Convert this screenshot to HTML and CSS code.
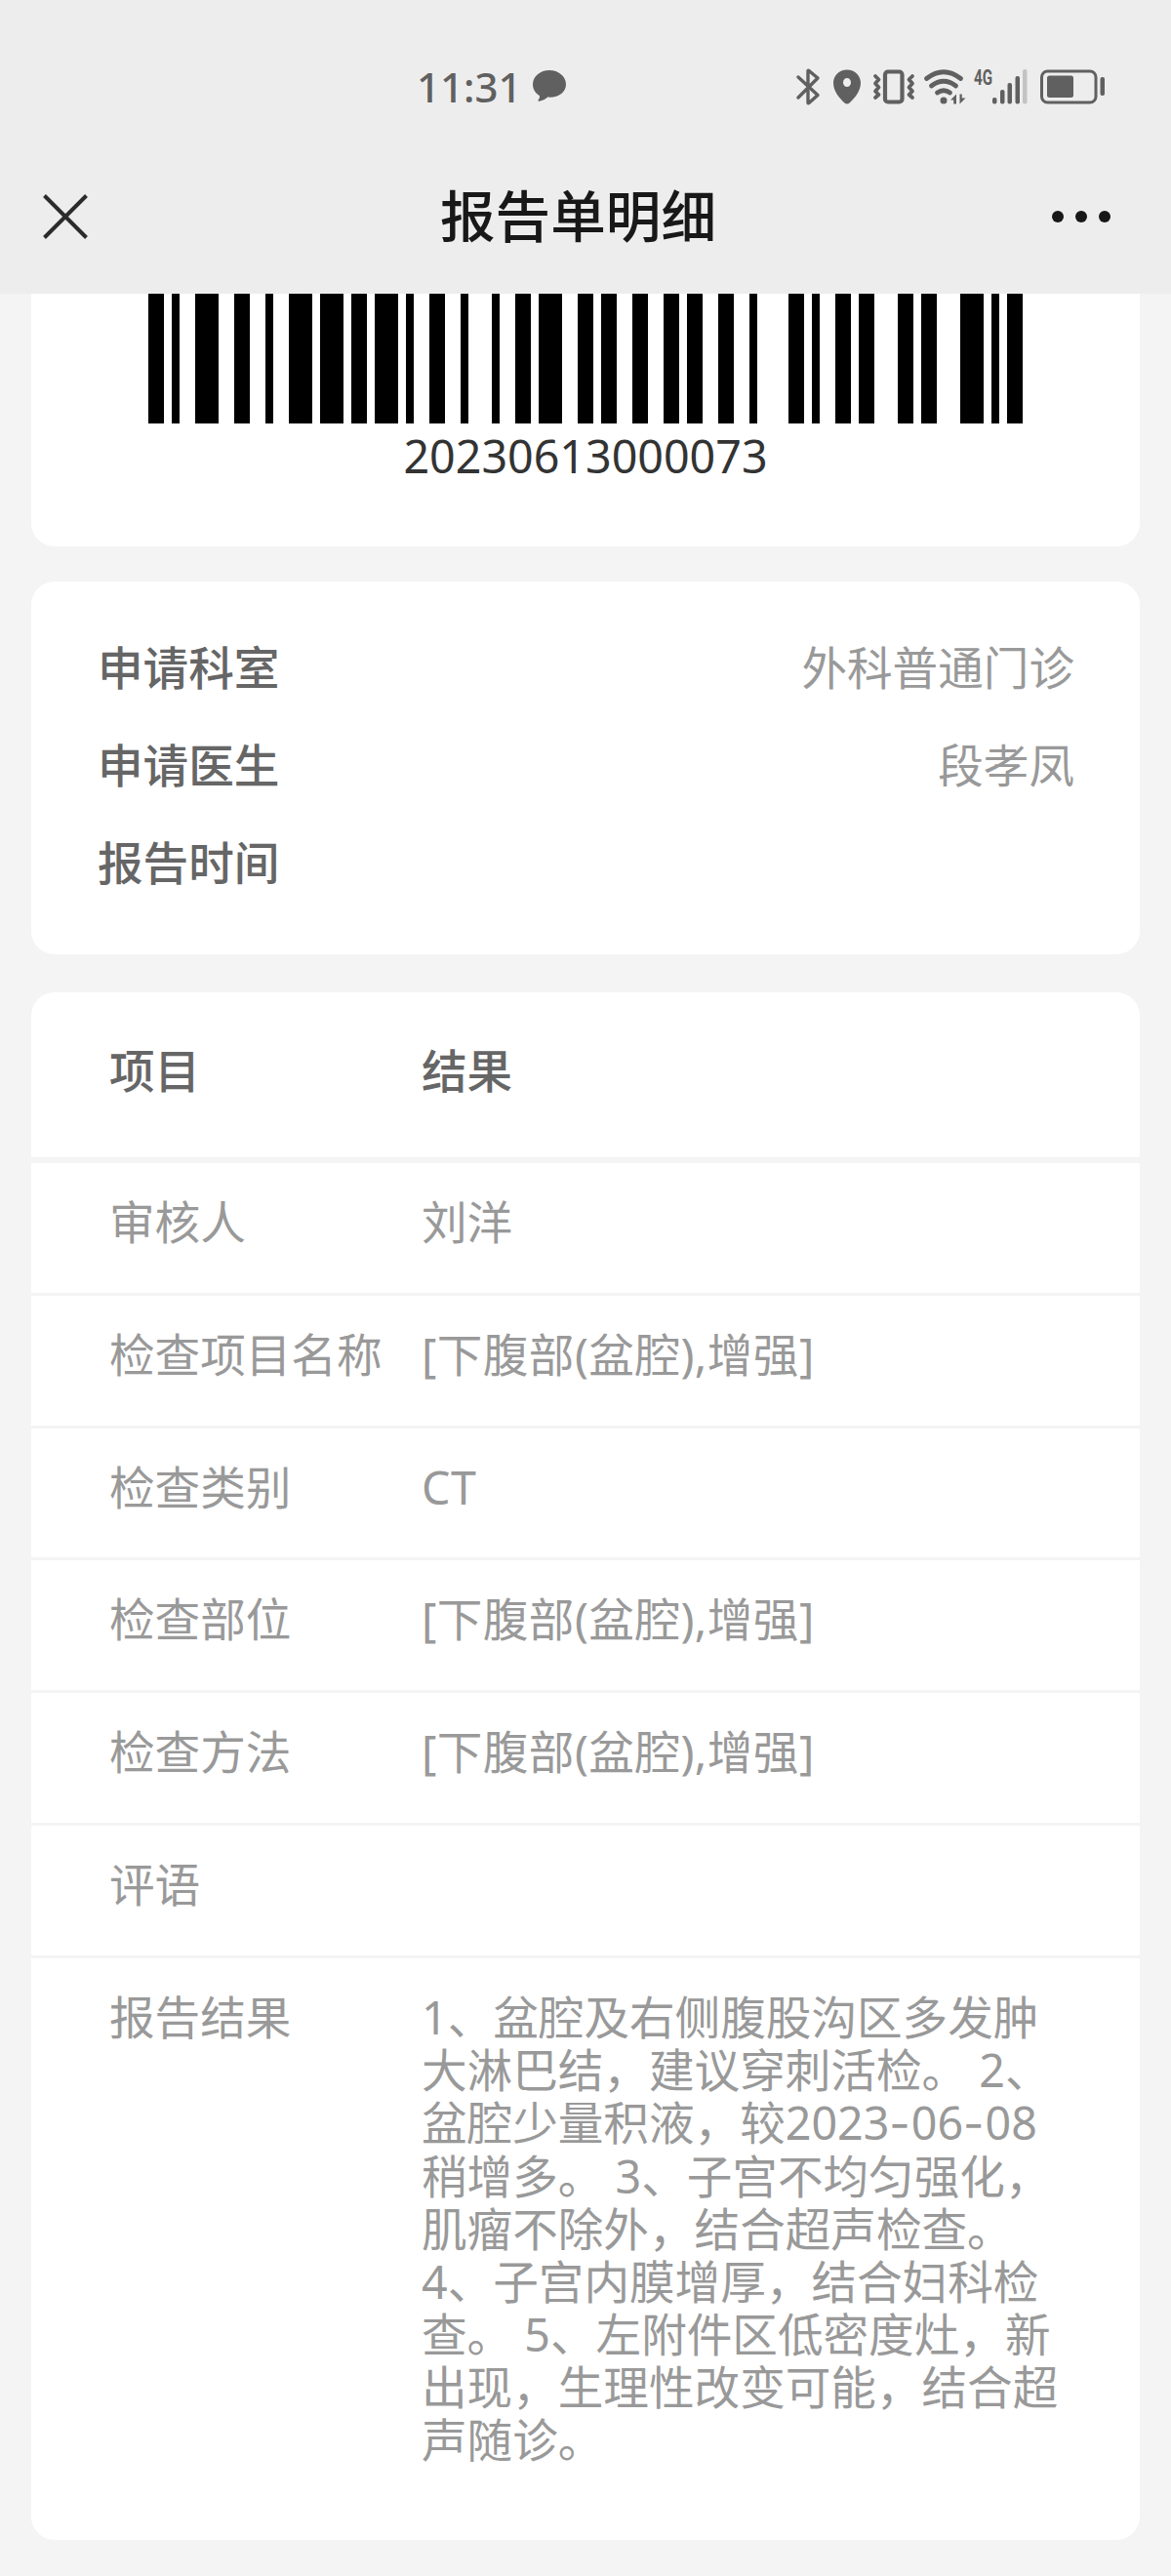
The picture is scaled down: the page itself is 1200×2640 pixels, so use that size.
FILE: index.html
```html
<!DOCTYPE html>
<html lang="zh-CN">
<head>
    <meta charset="UTF-8">
    <meta name="viewport" content="width=device-width, initial-scale=1.0">
    <title>报告单明细</title>
    <link rel="stylesheet" href="styles.css">
</head>
<body>
    <header>
        <div class="status">
            <div class="clock">
                <span>11:31</span>
                <svg width="34" height="34" viewBox="0 0 34 34"><path d="M17 1C7.600 1 0 7.200 0 15.500c0 4.800 2.500 8.800 6.800 11.500.6 1.500-.2 3-1.200 4.600-.4.8.1 1.400 1 1.200 3.600-.8 6.200-2 8.600-4.200C26 29.500 34 23.800 34 15.500 34 7.200 26.400 1 17 1z"/></svg>
            </div>
            <div class="icons">
                <!-- bluetooth -->
                <svg class="line" width="24" height="38" viewBox="0 0 24 38"><path d="M2 9l20 18.500-9 8q-1 .8-1-.5V23M2 30L22 10l-9-7.500q-1-.8-1 .5V16"/></svg>
                <!-- location -->
                <svg class="pin" width="28" height="36" viewBox="0 0 28 36"><path fill-rule="evenodd" d="M14 .5C6 .5 0 6.500 0 14c0 8 6 15.500 11.500 20.500q2.500 2 5 0C22 29.500 28 22 28 14 28 6.500 22 .5 14 .5zM14 9a4 4.500 0 1 1 0 9 4 4.500 0 1 1 0-9z"/></svg>
                <!-- vibrate -->
                <svg class="vibrate line" width="42" height="36" viewBox="0 0 42 36"><rect x="12" y="2.500" width="17.500" height="31" rx="3"/><path class="zig" d="M2 7l3.500 3.500-3.500 4 3.500 4-3.500 4 3.500 3.500-3.500 3M40 7l-3.500 3.500 3.500 4-3.500 4 3.500 4-3.500 3.500 3.500 3"/></svg>
                <!-- wifi -->
                <svg class="wifi line" width="43" height="36" viewBox="0 0 43 36"><path d="M2.500 9.500q17.500-13.500 35 0M7.500 17q12.500-9.500 25 0M13.500 24q6.500-4.500 13 0"/><circle class="solid" cx="20" cy="32" r="3.500"/><path class="solid" d="M27 31.500l6-6V35.500h-2.800v-4zM42.500 29.500l-6 6V25.500h2.300v4z"/></svg>
                <!-- signal -->
                <svg class="signal" width="55" height="36" viewBox="0 0 55 36"><text x="0" y="16" textLength="19" lengthAdjust="spacingAndGlyphs">4G</text><rect x="19" y="29" width="4.500" height="6.500" rx="2"/><rect x="27" y="21" width="4.500" height="14.500" rx="2"/><rect x="34.500" y="14" width="4.500" height="21.500" rx="2"/><rect x="42.500" y="7" width="4.500" height="28.500" rx="2"/><rect class="off" x="50" y="0" width="4.500" height="35.500" rx="2"/></svg>
                <!-- battery -->
                <svg class="battery" width="67" height="36" viewBox="0 0 67 36"><rect class="case" x="1.500" y="2" width="55.500" height="32" rx="6"/><rect x="7" y="6.500" width="27" height="22.500" rx="2.500"/><rect x="61.500" y="8" width="4.500" height="19" rx="2"/></svg>
            </div>
        </div>
        <div class="navbar">
            <svg class="close" width="46" height="46" viewBox="0 0 46 46"><path d="M1.500 1.500l43 43M44.500 1.500l-43 43"/></svg>
            <h1>报告单明细</h1>
            <svg class="more" width="60" height="12" viewBox="0 0 60 12"><circle cx="6" cy="6" r="6"/><circle cx="30" cy="6" r="6"/><circle cx="54" cy="6" r="6"/></svg>
        </div>
    </header>

    <div class="card code">
        <svg width="896" height="133" viewBox="0 0 112 133" preserveAspectRatio="none"><path d="M0 0h2v133h-2zM3 0h1v133h-1zM6 0h3v133h-3zM11 0h2v133h-2zM15 0h1v133h-1zM18 0h3v133h-3zM22 0h3v133h-3zM26 0h2v133h-2zM29 0h3v133h-3zM33 0h1v133h-1zM36 0h2v133h-2zM40 0h1v133h-1zM44 0h1v133h-1zM47 0h2v133h-2zM50 0h3v133h-3zM55 0h2v133h-2zM58 0h2v133h-2zM62 0h2v133h-2zM66 0h2v133h-2zM69 0h2v133h-2zM73 0h2v133h-2zM77 0h1v133h-1zM82 0h2v133h-2zM85 0h1v133h-1zM88 0h2v133h-2zM91 0h2v133h-2zM96 0h2v133h-2zM99 0h2v133h-2zM104 0h3v133h-3zM108 0h1v133h-1zM110 0h2v133h-2z"/></svg>
        <p>20230613000073</p>
    </div>

    <div class="card info">
        <div class="line-item"><b>申请科室</b><span>外科普通门诊</span></div>
        <div class="line-item"><b>申请医生</b><span>段孝凤</span></div>
        <div class="line-item"><b>报告时间</b><span></span></div>
    </div>

    <div class="card result">
        <div class="row head"><div>项目</div><div>结果</div></div>
        <div class="row"><div>审核人</div><div>刘洋</div></div>
        <div class="row"><div>检查项目名称</div><div class="part">[下腹部(盆腔),增强]</div></div>
        <div class="row"><div>检查类别</div><div class="part">CT</div></div>
        <div class="row"><div>检查部位</div><div class="part">[下腹部(盆腔),增强]</div></div>
        <div class="row"><div>检查方法</div><div class="part">[下腹部(盆腔),增强]</div></div>
        <div class="row"><div>评语</div><div></div></div>
        <div class="row">
            <div>报告结果</div>
            <div>1、盆腔及右侧腹股沟区多发肿<br>大淋巴结，建议穿刺活检。 2、<br>盆腔少量积液，较2023<i>-</i>06<i>-</i>08<br>稍增多。 3、子宫不均匀强化，<br>肌瘤不除外，结合超声检查。<br>4、子宫内膜增厚，结合妇科检<br>查。 5、左附件区低密度灶，新<br>出现，生理性改变可能，结合超<br>声随诊。</div>
        </div>
    </div>
</body>
</html>
```

FILE: styles.css
```css
*{
    box-sizing: border-box;
}
body{
    margin: 0;
    background-color: #f4f4f4;
    font-family: "Noto Sans", "Noto Sans CJK SC", sans-serif;
    font-size: 46.6px;
    line-height: 54px;
    color: #999;
    text-spacing-trim: space-all;
}
svg{
    display: block;
    flex: none;
    overflow: visible;
}
header{
    height: 301px;
    background-color: #ededed;
}
.status{
    height: 160px;
    padding: 70px 67px 0 427px;
    display: flex;
    justify-content: space-between;
    align-items: flex-start;
    color: #606060;
    fill: #606060;
}
.clock{
    display: flex;
    gap: 11px;
    font-size: 42px;
    font-weight: 500;
    line-height: 38px;
}
.clock svg{
    margin-top: 1px;
}
.icons{
    display: flex;
    align-items: center;
}
.line{
    fill: none;
    stroke: #606060;
    stroke-width: 3.4;
    stroke-linecap: round;
    stroke-linejoin: round;
}
.pin{
    margin-left: 14px;
}
.vibrate{
    margin-left: 13px;
    stroke-width: 4.2;
}
.zig{
    stroke-width: 3.8;
}
.wifi{
    margin-left: 10px;
    stroke-width: 4.8;
}
.solid{
    fill: #606060;
    stroke: none;
}
.signal{
    margin-left: 8px;
}
.signal text{
    font-family: Roboto, sans-serif;
    font-size: 21.5px;
    font-weight: 700;
}
.off{
    fill: #c3c3c3;
}
.battery{
    margin-left: 13px;
}
.case{
    fill: none;
    stroke: #606060;
    stroke-width: 3;
}
.navbar{
    height: 123px;
    padding: 0 62px 0 44px;
    display: grid;
    grid-template-columns: 60px 1fr 60px;
    align-items: center;
}
.close{
    stroke: #2b2b2b;
    stroke-width: 4;
}
.more{
    fill: #181818;
}
h1{
    margin: 0;
    padding: 0 0 2px 3px;
    font-size: 56.6px;
    font-weight: 500;
    text-align: center;
    color: #181818;
}
.card{
    margin: 0 32px;
    background-color: #fff;
    border-radius: 24px;
}
.code{
    height: 259px;
    border-radius: 0 0 24px 24px;
    display: flex;
    flex-direction: column;
    align-items: center;
    color: #333;
    fill: #000;
}
.code p{
    margin: 6px 0 0;
}
.info{
    margin-top: 36px;
    height: 382px;
    padding: 38px 67px 38px 68px;
}
.line-item{
    height: 100px;
    display: flex;
    justify-content: space-between;
    align-items: center;
}
.line-item b{
    font-weight: 500;
    color: #666;
}
.result{
    margin-top: 39px;
    height: 1586px;
}
.row{
    min-height: 135.8px;
    padding: 33px 68px 0 80px;
    display: grid;
    grid-template-columns: 320px 1fr;
    border-bottom: 3px solid #f4f4f4;
    white-space: nowrap;
}
.row:last-child{
    border-bottom: none;
}
.head{
    height: 175px;
    padding-top: 53px;
    border-bottom-width: 6px;
    font-weight: 500;
    color: #666;
}
.part{
    letter-spacing: .45px;
}
.row i{
    font-family: Inter, sans-serif;
    font-style: normal;
    letter-spacing: 1px;
}
```
